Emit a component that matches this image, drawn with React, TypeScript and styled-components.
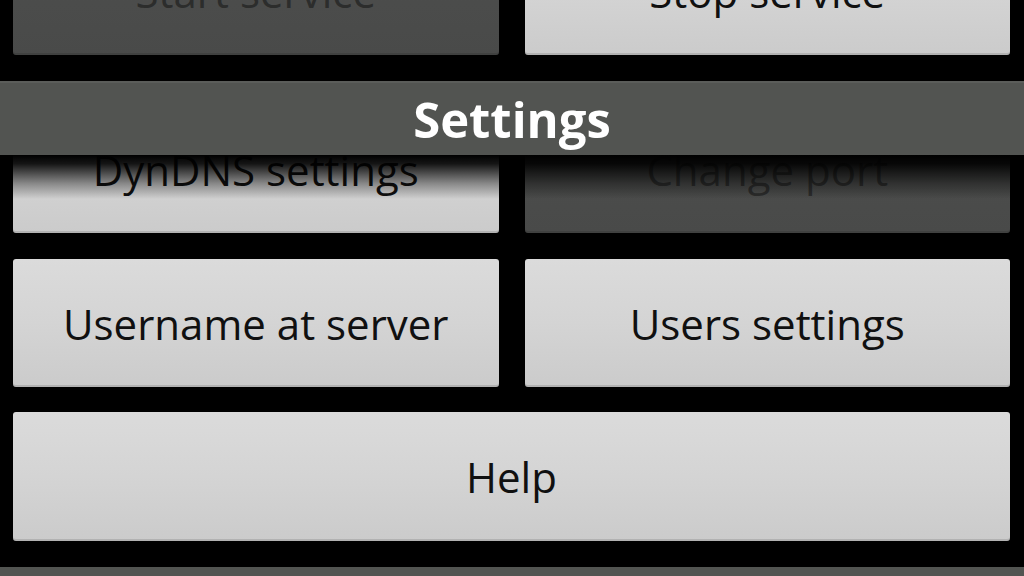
import { FC } from 'react'
import styled, { createGlobalStyle, css } from 'styled-components'

const GlobalStyle = createGlobalStyle`
  html, body {
    margin: 0;
    padding: 0;
    background: #000000;
  }
  body {
    font-family: "Open Sans", "DejaVu Sans", sans-serif;
  }
`

const Screen = styled.div`
  width: 1024px;
  height: 576px;
  overflow: hidden;
  background: #000000;
  display: flex;
  flex-direction: column;
`

// the list is scrolled, so the first row sits partly above the top edge
const ScrollContent = styled.div`
  display: flex;
  flex-direction: column;
  padding: 0 14px 0 13px;
  margin-top: -73px;
`

const ButtonRow = styled.div<{ $gapAfter?: number }>`
  display: grid;
  grid-template-columns: 1fr 1fr;
  column-gap: 26px;
  margin-bottom: ${({ $gapAfter }) => $gapAfter ?? 26}px;
`

const ActionButton = styled.button<{ $disabled?: boolean; $tall?: boolean }>`
  height: ${({ $tall }) => ($tall ? 129 : 128)}px;
  border: none;
  border-radius: 3px;
  padding: 0;
  font-family: "Open Sans", "DejaVu Sans", sans-serif;
  font-size: 42px;
  display: flex;
  align-items: center;
  justify-content: center;
  box-shadow: inset 0 -2px 0 rgba(0, 0, 0, 0.12);

  ${({ $disabled }) =>
    $disabled
      ? css`
          background: linear-gradient(180deg, #4e4f4e 0%, #494a49 100%);
          color: #2c2d2c;
        `
      : css`
          background: linear-gradient(180deg, #dbdbdb 0%, #d4d4d4 50%, #cbcbcb 100%);
          color: #101010;
        `}
`

const SectionBar = styled.div`
  position: relative;
  z-index: 1;
  height: 72px;
  margin: 0 -14px -50px -13px;
  background: #525451;
  border-top: 2px solid #5b5d5a;
  display: flex;
  align-items: center;
  justify-content: center;
  color: #ffffff;
  font-family: "Open Sans", "DejaVu Sans", sans-serif;
  font-weight: 700;
  font-size: 49px;

  /* fading edge of the list under the bar */
  &::after {
    content: '';
    position: absolute;
    top: 100%;
    left: 0;
    right: 0;
    height: 44px;
    background: linear-gradient(
      180deg,
      rgba(0, 0, 0, 1) 0%,
      rgba(0, 0, 0, 0.9) 20%,
      rgba(0, 0, 0, 0.35) 65%,
      rgba(0, 0, 0, 0) 100%
    );
    pointer-events: none;
  }
`

const BarSpacer = styled.div`
  height: 26px;
`

const FullButton = styled(ActionButton)`
  width: 100%;
`

const BottomBar = styled.div`
  margin-top: 26px;
  height: 12px;
  background: #525451;
  flex-shrink: 0;
`

const App: FC = () => (
  <Screen>
    <GlobalStyle />
    <ScrollContent>
      <ButtonRow $gapAfter={0}>
        <ActionButton $disabled>Start service</ActionButton>
        <ActionButton>Stop service</ActionButton>
      </ButtonRow>
      <BarSpacer />
      <SectionBar>Settings</SectionBar>
      <ButtonRow>
        <ActionButton>DynDNS settings</ActionButton>
        <ActionButton $disabled>Change port</ActionButton>
      </ButtonRow>
      <ButtonRow $gapAfter={25}>
        <ActionButton>Username at server</ActionButton>
        <ActionButton>Users settings</ActionButton>
      </ButtonRow>
      <FullButton $tall>Help</FullButton>
    </ScrollContent>
    <BottomBar />
  </Screen>
)

export default App
